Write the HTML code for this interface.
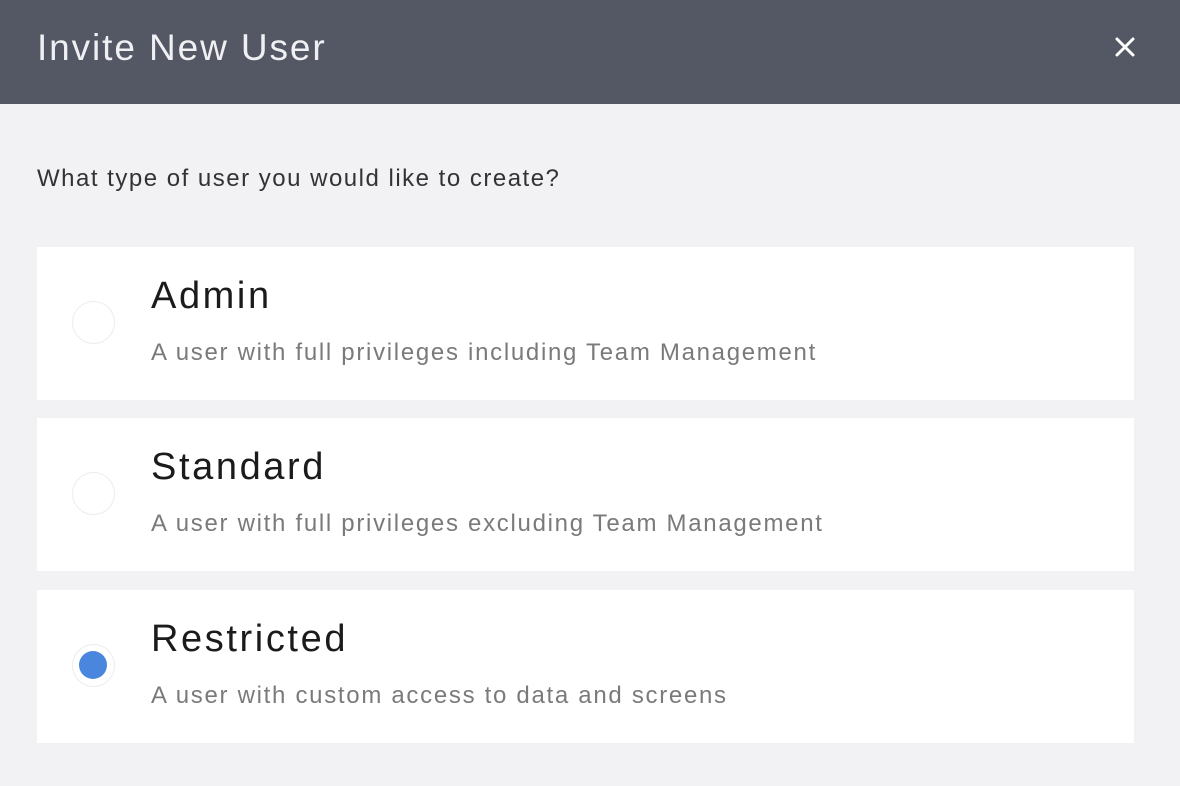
<!DOCTYPE html>
<html><head><style>
body{margin:0;width:1180px;height:786px;background:#f2f1f4;font-family:"Liberation Sans",sans-serif;overflow:hidden;position:relative}
.hd{position:absolute;left:0;top:0;width:1180px;height:104px;background:#545764}
.hd h1{position:absolute;left:37px;top:27px;margin:0;font-weight:normal;font-size:37px;color:#f0f0f4;letter-spacing:1.9px}
.x{position:absolute;left:1111px;top:33px;width:28px;height:28px}
.q{position:absolute;left:37px;top:165px;font-size:24px;color:#333;letter-spacing:1.5px}
.card{position:absolute;left:37px;width:1097px;height:153px;background:#fff}
.r{position:absolute;left:35px;top:54px;width:43px;height:43px;border-radius:50%;border:1.5px solid #ececec;box-sizing:border-box;background:#fff}
.r.on::after{content:"";position:absolute;left:6px;top:6px;width:28px;height:28px;border-radius:50%;background:#4a86de}
.t{position:absolute;left:114px;top:28px;font-size:38px;color:#1b1b1b;letter-spacing:2.6px}
.d{position:absolute;left:114px;top:92px;font-size:24px;color:#7a7a7a;letter-spacing:1.7px}
</style></head><body>
<div class="hd"><h1>Invite New User</h1>
<svg class="x" viewBox="0 0 28 28"><path d="M6 6L22 22M22 6L6 22" stroke="#fff" stroke-width="3" stroke-linecap="round"/></svg></div>
<div class="q">What type of user you would like to create?</div>
<div class="card" style="top:247px"><div class="r"></div><div class="t">Admin</div><div class="d">A user with full privileges including Team Management</div></div>
<div class="card" style="top:418px"><div class="r"></div><div class="t">Standard</div><div class="d">A user with full privileges excluding Team Management</div></div>
<div class="card" style="top:590px"><div class="r on"></div><div class="t">Restricted</div><div class="d">A user with custom access to data and screens</div></div>
</body></html>
